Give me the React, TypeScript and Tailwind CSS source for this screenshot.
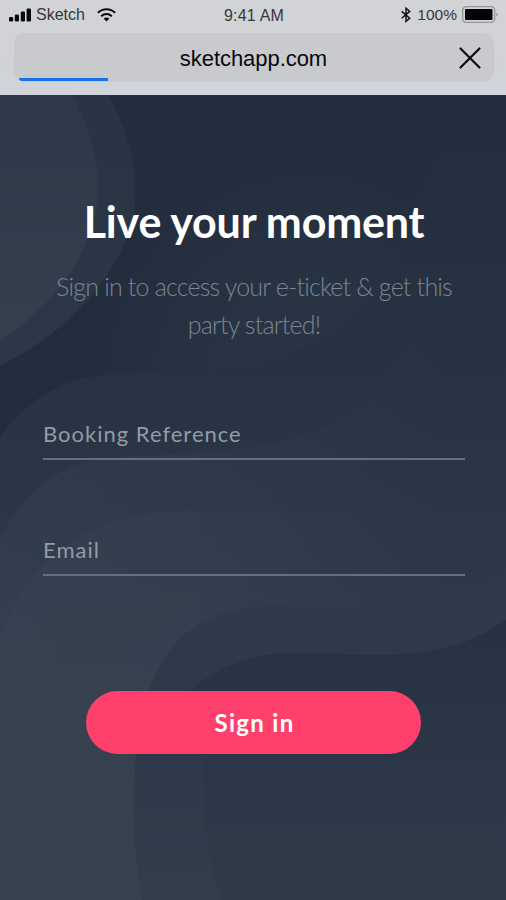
import type { ReactNode } from "react";

function SignalIcon() {
  return (
    <svg width="23" height="14" viewBox="0 0 23 14" fill="#080a0d">
      <rect x="0" y="9" width="4.2" height="4.5" rx="1.2" />
      <rect x="5.8" y="6.5" width="4.2" height="7" rx="1.2" />
      <rect x="11.8" y="3.5" width="4.2" height="10" rx="1.2" />
      <rect x="17.6" y="0.5" width="4.4" height="13" rx="1.2" />
    </svg>
  );
}

function WifiIcon() {
  return (
    <svg width="19" height="14" viewBox="0 0 19 14" fill="none" stroke="#080a0d" strokeWidth="2.1">
      <path d="M0.9 4.8C5.8 0.1 13.2 0.1 18.1 4.8" />
      <path d="M4.2 8.2C7.3 5.3 11.7 5.3 14.8 8.2" />
      <path d="M6.6 10.6C8.3 9.1 10.7 9.1 12.4 10.6L9.5 13.5Z" fill="#080a0d" stroke="none" />
    </svg>
  );
}

function BluetoothIcon() {
  return (
    <svg width="10" height="16" viewBox="0 0 10 16" fill="none" stroke="#111317" strokeWidth="1.5">
      <path d="M0.7 4.4L8.7 11.2L5 14.4V1.2L8.7 4.4L0.7 11.2" />
    </svg>
  );
}

function BatteryIcon() {
  return (
    <svg width="37" height="17" viewBox="0 0 37 17">
      <rect x="0.7" y="0.7" width="32" height="15.6" rx="3.6" fill="none" stroke="#94969a" strokeWidth="1.3" />
      <rect x="3" y="3" width="27.5" height="11" rx="1" fill="#030405" />
      <path d="M34.3 6.5V10.5C36.3 9.7 36.3 7.3 34.3 6.5Z" fill="#94969a" />
    </svg>
  );
}

function BrowserBar() {
  return (
    <header className="relative h-[95px] bg-linear-to-b from-[#d1d3d7] from-80% to-[#d0d6de] font-['Liberation_Sans',sans-serif]">
      <div className="grid h-[33px] grid-cols-[1fr_auto_1fr] items-center pl-[9px] pr-[7px] pb-[2px] text-[15.5px] text-[#35373b]">
        <div className="flex items-center pb-[2px]">
          <SignalIcon />
          <span className="ml-[4px] mr-[12px] text-[16px]">Sketch</span>
          <WifiIcon />
        </div>
        <span className="text-[16px] tracking-[0.2px]">9:41 AM</span>
        <div className="flex items-center justify-end pb-[2px]">
          <BluetoothIcon />
          <span className="ml-[6px] mr-[5px]">100%</span>
          <BatteryIcon />
        </div>
      </div>
      <div className="ml-[14px] mr-[12px] flex h-[49px] items-center rounded-[11px] bg-[#c8cacd] pr-[12px]">
        <span className="flex-1 pl-[35px] pt-[2px] text-center text-[22px] tracking-[-0.05px] text-[#08090b]">
          sketchapp.com
        </span>
        <svg width="24" height="24" viewBox="0 0 24 24" stroke="#08090b" strokeWidth="2.2" strokeLinecap="round">
          <path d="M2.5 2.5L21.5 21.5M21.5 2.5L2.5 21.5" />
        </svg>
      </div>
      <div className="absolute left-[19px] top-[78px] h-[3px] w-[89px] rounded-bl-full bg-[#1672ed]" />
    </header>
  );
}

function Waves() {
  return (
    <svg className="absolute inset-0" width="506" height="805" viewBox="0 95 506 805">
      <defs>
        <linearGradient id="base" x1="0" y1="0" x2="0" y2="1">
          <stop offset="0" stopColor="#222d3d" />
          <stop offset="1" stopColor="#222b3c" />
        </linearGradient>
        <linearGradient id="outer" gradientUnits="userSpaceOnUse" x1="0" y1="95" x2="0" y2="366">
          <stop offset="0" stopColor="#283444" />
          <stop offset="1" stopColor="#2c3848" />
        </linearGradient>
        <linearGradient id="inner" gradientUnits="userSpaceOnUse" x1="0" y1="95" x2="0" y2="340">
          <stop offset="0" stopColor="#2d3948" />
          <stop offset="1" stopColor="#35404f" />
        </linearGradient>
        <radialGradient id="haze" gradientUnits="userSpaceOnUse" cx="310" cy="380" r="235">
          <stop offset="0" stopColor="#293545" />
          <stop offset="0.35" stopColor="#293545" stopOpacity="0.85" />
          <stop offset="1" stopColor="#293545" stopOpacity="0" />
        </radialGradient>
        <linearGradient id="band" gradientUnits="userSpaceOnUse" x1="0" y1="95" x2="0" y2="650">
          <stop offset="0" stopColor="#222d3d" />
          <stop offset="0.5" stopColor="#273343" />
          <stop offset="1" stopColor="#2f3a4a" />
        </linearGradient>
        {/* the two upper folds dissolve into the band towards the right */}
        <linearGradient id="mid" gradientUnits="userSpaceOnUse" x1="0" y1="0" x2="440" y2="0">
          <stop offset="0" stopColor="#384453" stopOpacity="0.42" />
          <stop offset="0.5" stopColor="#384453" stopOpacity="0.24" />
          <stop offset="1" stopColor="#384453" stopOpacity="0" />
        </linearGradient>
        <linearGradient id="near" gradientUnits="userSpaceOnUse" x1="0" y1="0" x2="400" y2="0">
          <stop offset="0" stopColor="#384453" stopOpacity="0.42" />
          <stop offset="0.5" stopColor="#384453" stopOpacity="0.26" />
          <stop offset="1" stopColor="#384453" stopOpacity="0" />
        </linearGradient>
        <linearGradient id="fold" gradientUnits="userSpaceOnUse" x1="0" y1="600" x2="0" y2="900">
          <stop offset="0" stopColor="#2f3a4a" />
          <stop offset="0.5" stopColor="#2d3848" />
          <stop offset="1" stopColor="#333e4d" />
        </linearGradient>
        <linearGradient id="deep" gradientUnits="userSpaceOnUse" x1="0" y1="620" x2="0" y2="900">
          <stop offset="0" stopColor="#263243" />
          <stop offset="1" stopColor="#303b4a" />
        </linearGradient>
        <linearGradient id="floor" gradientUnits="userSpaceOnUse" x1="0" y1="560" x2="0" y2="700">
          <stop offset="0" stopColor="#364250" stopOpacity="0" />
          <stop offset="1" stopColor="#364250" stopOpacity="0.8" />
        </linearGradient>
      </defs>
      <rect y="95" width="506" height="805" fill="url(#base)" />
      <rect y="95" width="506" height="805" fill="url(#haze)" />
      <path d="M0 95H108C136 145 148 205 118 257C88 310 48 341 0 366Z" fill="url(#outer)" />
      <path d="M0 95H72C97 139 107 190 88 238C68 286 38 315 0 340Z" fill="url(#inner)" />
      <path d="M0 438C27 398 65 376 118 374C215 372 330 366 382 285C423 219 414 129 506 95V900H0Z" fill="url(#band)" />
      <path d="M0 538C22 495 55 465 105 458C225 450 325 452 375 390C400 355 415 320 506 290V900H0Z" fill="url(#mid)" />
      <path d="M0 638C20 578 64 532 130 517C220 497 325 533 405 490C448 470 480 455 506 448V900H0Z" fill="url(#near)" />
      <path d="M0 560H200V900H0Z" fill="url(#floor)" />
      <path d="M142 900C131 845 130 758 145 704C162 634 210 607 275 605C374 600 444 620 506 573V900Z" fill="url(#fold)" />
      <path d="M222 900C200 845 201 770 210 735H162C179 682 237 654 288 653C369 652 440 668 506 619V900Z" fill="url(#deep)" />
    </svg>
  );
}

function Field({ children }: { children: ReactNode }) {
  return (
    <div className="h-[40px] border-b-2 border-[#64707d] text-[22px] leading-[28px] tracking-[1px] text-[#929ba7]">
      {children}
    </div>
  );
}

export default function App() {
  return (
    <div className="flex h-[900px] w-[506px] flex-col overflow-hidden bg-[#222d3d]">
      <BrowserBar />
      <main className="relative flex-1 font-['Lato',sans-serif]">
        <Waves />
        <div className="relative flex flex-col pl-[43px] pr-[41px] pt-[99px]">
          <h1 className="whitespace-nowrap text-center text-[43px] font-bold leading-[56px] tracking-[-0.2px] text-white">
            Live your moment
          </h1>
          <p className="mt-[17px] whitespace-nowrap text-center text-[25px] font-light leading-[38px] tracking-[-0.8px] text-[#7c8591]">
            Sign in to access your e-ticket &amp; get this
            <br />
            party started!
          </p>
          <div className="mt-[77px] flex flex-col gap-[76px]">
            <Field>Booking Reference</Field>
            <Field>Email</Field>
          </div>
          <button className="mt-[115px] ml-[43px] h-[63px] w-[335px] rounded-full bg-[#ff406c] pl-[2px] text-[24px] font-bold tracking-[1.3px] text-white">
            Sign in
          </button>
        </div>
      </main>
    </div>
  );
}
